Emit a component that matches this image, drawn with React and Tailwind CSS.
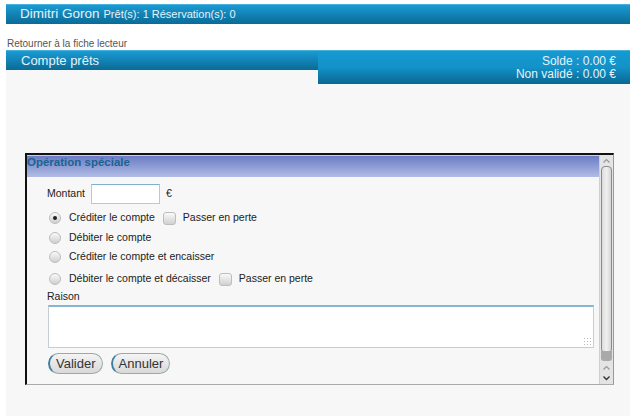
import React from 'react';

const Radio = ({ checked }) => (
  <span className="inline-flex items-center justify-center w-[12px] h-[12px] rounded-full border border-[#bdbdbd] bg-gradient-to-b from-[#fafafa] to-[#cfcfcf] mr-[8px] shrink-0">
    {checked && <span className="w-[4px] h-[4px] rounded-full bg-[#222]" />}
  </span>
);

const Check = () => (
  <span className="inline-block w-[13px] h-[13px] rounded-[3px] border border-[#bdbdbd] bg-gradient-to-b from-[#fafafa] to-[#d0d0d0] ml-[8px] mr-[7px] shrink-0" />
);

const Btn = ({ children }) => (
  <button className="h-[21px] px-[6px] rounded-[11px] border border-[#9aa] border-l-[#3d7fa0] border-l-2 bg-gradient-to-b from-[#f4f4f4] to-[#d9d9d9] text-[13px] text-[#333] leading-none">
    {children}
  </button>
);

export default function App() {
  return (
    <div className="w-[630px] h-[416px] bg-white flex flex-col pt-[4px] overflow-hidden" style={{ fontFamily: '"Liberation Sans", Arial, sans-serif' }}>
      {/* header bar */}
      <div className="ml-[6px] h-[20px] bg-gradient-to-b from-[#1a9bd3] to-[#0a6b97] border-t border-[#48b0dc] flex items-center pl-[14px] text-[#e4f3fa]">
        <span className="text-[13.5px]">Dimitri Goron</span>
        <span className="text-[11px] ml-[4px]">Prêt(s): 1 Réservation(s): 0</span>
      </div>

      <div className="mt-[14px] ml-[7px] text-[10px] leading-[12px] text-[#555]">Retourner à la fiche lecteur</div>

      <div className="ml-[6px] flex-1 bg-[#f7f7f7] flex flex-col">
        <div className="flex items-start">
          <div className="w-[312px] h-[20px] bg-gradient-to-b from-[#1a9bd3] to-[#0a6b97] border-t border-[#48b0dc] text-[#e4f3fa] text-[13px] flex items-center pl-[15px]">
            Compte prêts
          </div>
          <div className="flex-1 h-[34px] bg-gradient-to-b from-[#159ad2] via-[#1292c8] to-[#0a6791] border-t border-[#48b0dc] text-[#e4f3fa] text-[12px] leading-[13px] text-right pr-[14px] pt-[4px]">
            <div>Solde : 0.00 €</div>
            <div>Non validé : 0.00 €</div>
          </div>
        </div>

        {/* dialog */}
        <div className="ml-[19px] mt-[69px] w-[589px] h-[232px] border-l-2 border-t-2 border-[#111] border-r border-b border-r-[#999] border-b-[#aaa] bg-[#f7f7f7] flex">
          <div className="flex-1 flex flex-col">
            <div className="h-[22px] bg-gradient-to-b from-[#6c7cc4] to-[#b2bce4] flex items-start text-[11.5px] font-bold text-[#1b6390] leading-[13px] border-t border-[#c9cde6]">
              Opération spéciale
            </div>
            <div className="pl-[20px] pt-[7px] text-[10.5px] text-[#222]">
              <div className="flex items-center h-[20px]">
                <span>Montant</span>
                <span className="ml-[6px] w-[69px] h-[20px] bg-white border border-[#b9c9d4] border-t-[#7fb0cc]" />
                <span className="ml-[6px]">€</span>
              </div>
              <div className="flex items-center h-[20px] mt-[4px] pl-[2px]">
                <Radio checked />
                <span>Créditer le compte</span>
                <Check />
                <span>Passer en perte</span>
              </div>
              <div className="flex items-center h-[19px] pl-[2px]">
                <Radio />
                <span>Débiter le compte</span>
              </div>
              <div className="flex items-center h-[19px] pl-[2px]">
                <Radio />
                <span>Créditer le compte et encaisser</span>
              </div>
              <div className="flex items-center h-[20px] mt-[3px] pl-[2px]">
                <Radio />
                <span>Débiter le compte et décaisser</span>
                <Check />
                <span>Passer en perte</span>
              </div>
              <div className="h-[14px] leading-[14px]">Raison</div>
              <div className="relative mt-[2px] ml-[1px] w-[546px] h-[43px] bg-white border border-[#c5ced4] border-t-2 border-t-[#85b5cf]">
                <span className="absolute right-[2px] bottom-[2px] w-[8px] h-[8px] bg-[radial-gradient(#bbb_1px,transparent_1px)] bg-[length:3px_3px]" />
              </div>
              <div className="flex gap-[8px] mt-[5px] ml-[1px]">
                <Btn>Valider</Btn>
                <Btn>Annuler</Btn>
              </div>
            </div>
          </div>
          {/* scrollbar */}
          <div className="w-[14px] bg-[#e4e4e4] border-l border-[#cfcfcf] flex flex-col items-center">
            <svg width="9" height="10" viewBox="0 0 9 10" className="mt-[1px]"><path d="M1.5 6.5 L4.5 3.5 L7.5 6.5" stroke="#999" strokeWidth="1.2" fill="none" /></svg>
            <div className="w-[11px] h-[187px] rounded-[4px] border border-[#8a8a8a] bg-gradient-to-r from-[#dcdcdc] via-[#f0f0f0] to-[#d4d4d4]" />
            <div className="w-[11px] h-[10px] bg-[#a9a9a9] rounded-b-[3px] -mt-[2px]" />
            <svg width="9" height="10" viewBox="0 0 9 10" className="mt-[2px]"><path d="M1.5 6.5 L4.5 3.5 L7.5 6.5" stroke="#999" strokeWidth="1.2" fill="none" /></svg>
            <svg width="9" height="10" viewBox="0 0 9 10"><path d="M1.5 3.5 L4.5 6.5 L7.5 3.5" stroke="#333" strokeWidth="1.4" fill="none" /></svg>
          </div>
        </div>
      </div>
    </div>
  );
}
